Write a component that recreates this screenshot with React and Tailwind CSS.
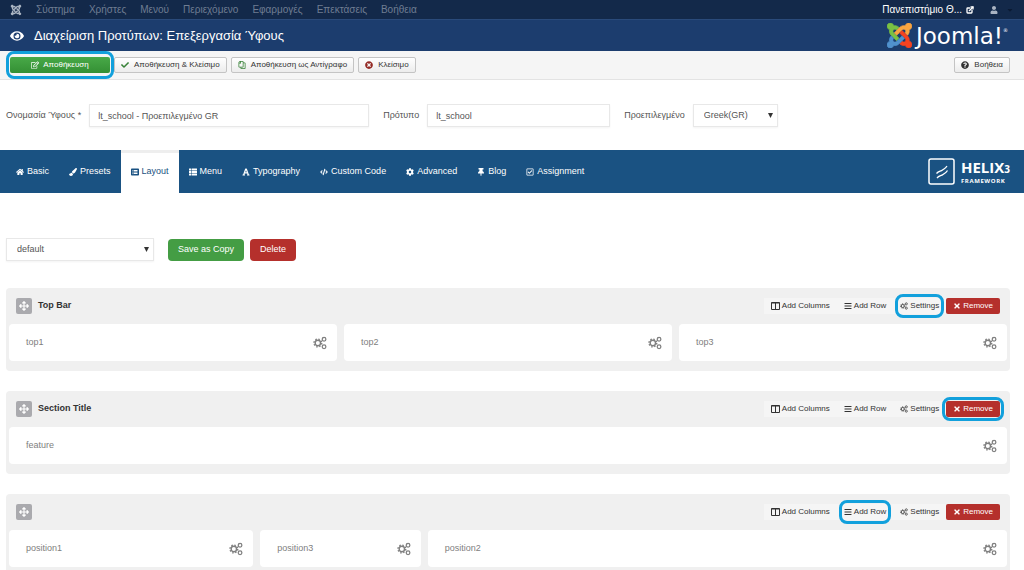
import React from 'react';
import {
  FaJoomla, FaEye, FaCheck, FaTimesCircle, FaQuestionCircle, FaUser, FaHome, FaPaintBrush,
  FaListAlt, FaThList, FaFont, FaCode, FaCog, FaThumbtack, FaRegCheckSquare, FaBars,
  FaTimes, FaArrowsAlt, FaRegCopy, FaCaretDown, FaRegEdit,
} from 'react-icons/fa';
import { FiExternalLink } from 'react-icons/fi';

const CogsIcon = ({ className }) => (
  <svg viewBox="0 0 26 26" className={className} fill="none" stroke="currentColor" aria-hidden="true">
    <circle cx="9" cy="13" r="5" strokeWidth="2.600" />
    <circle cx="9" cy="13" r="7.200" strokeWidth="2.600" strokeDasharray="2.830 2.830" />
    <circle cx="20.500" cy="6" r="3.400" strokeWidth="2.400" />
    <circle cx="20.500" cy="20" r="3.400" strokeWidth="2.400" />
  </svg>
);

const ColumnsIcon = ({ className }) => (
  <svg viewBox="0 0 9 8" className={className} fill="none" stroke="currentColor" aria-hidden="true">
    <path d="M.5 .5h8v7h-8zM4.500 1v6.500M.5 1h8" />
  </svg>
);

const menuItems = ['Σύστημα', 'Χρήστες', 'Μενού', 'Περιεχόμενο', 'Εφαρμογές', 'Επεκτάσεις', 'Βοήθεια'];

const tabs = [
  { label: 'Basic', icon: FaHome },
  { label: 'Presets', icon: FaPaintBrush },
  { label: 'Layout', icon: FaListAlt, active: true },
  { label: 'Menu', icon: FaThList },
  { label: 'Typography', icon: FaFont },
  { label: 'Custom Code', icon: FaCode },
  { label: 'Advanced', icon: FaCog },
  { label: 'Blog', icon: FaThumbtack },
  { label: 'Assignment', icon: FaRegCheckSquare },
];

const sections = [
  {
    title: 'Top Bar',
    marked: 'Settings',
    columns: [
      { name: 'top1', span: 'col-span-4' },
      { name: 'top2', span: 'col-span-4' },
      { name: 'top3', span: 'col-span-4' },
    ],
  },
  {
    title: 'Section Title',
    marked: 'Remove',
    columns: [{ name: 'feature', span: 'col-span-12' }],
  },
  {
    title: '',
    marked: 'Add Row',
    columns: [
      { name: 'position1', span: 'col-span-3' },
      { name: 'position3', span: 'col-span-2' },
      { name: 'position2', span: 'col-span-7' },
    ],
  },
];

const rowActions = [
  { label: 'Add Columns', icon: ColumnsIcon },
  { label: 'Add Row', icon: FaBars },
  { label: 'Settings', icon: CogsIcon },
  { label: 'Remove', icon: FaTimes },
];

const Marker = ({ className }) => (
  <span className={`pointer-events-none absolute z-10 rounded-lg border-[3px] border-[#12a0dc] ${className}`}></span>
);

const JoomlaMark = () => (
  <svg viewBox="0 32 448 448" className="size-[25px]" strokeWidth="12" aria-hidden="true">
    <path fill="#7ac143" stroke="#7ac143" d="M.6 92.100C.6 58.800 27.400 32 60.400 32c30 0 54.500 21.900 59.200 50.200 32.600-7.600 67.100.6 96.500 30l-44.300 44.300c-20.500-20.500-42.600-16.300-55.400-3.500-14.300 14.300-14.300 37.900 0 52.200l99.500 99.500-44 44.300c-87.700-87.200-49.700-49.700-99.800-99.700-26.800-26.500-35-64.800-24.800-98.900C20.400 144.600.6 120.700.6 92.100z" />
    <path fill="#f9a541" stroke="#f9a541" d="M130.100 208.500l44.300 44.300c10-10 89.700-89.700 99.700-99.800 14.300-14.300 37.600-14.300 51.900 0 12.800 12.800 17 35-3.500 55.400l44 44.300c31.200-31.200 38.500-67.600 28.900-101.200 29.200-4.100 51.900-29.200 51.900-59.500 0-33.200-26.800-60.100-59.800-60.100-30.300 0-55.400 22.500-59.500 51.600-33.800-9.900-71.700-1.500-98.300 25.100-18.300 19.100-71.100 71.500-99.600 99.900z" />
    <path fill="#f44321" stroke="#f44321" d="M396.400 360.700c8.200-32.700-.9-68.500-26.300-93.900-11.800-12.200 5 4.700-99.500-99.700l-44.300 44.300 99.700 99.700c14.300 14.300 14.300 37.600 0 51.900-12.800 12.800-35 17-55.400-3.500l-44 44.300c27.600 30.200 68 38.800 102.700 28 5.500 27.400 29.700 48.100 58.900 48.100 33 0 59.800-26.800 59.800-60.100 0-30.300-22.500-55.100-51.600-59.100z" />
    <path fill="#5091cd" stroke="#5091cd" d="M312.100 307.600l-44-44.300c-87 86.400-50.400 50.400-99.700 99.800-14.300 14.300-37.600 14.300-51.900 0-13.100-13.400-16.900-35.300 3.200-55.400l-44-44.300c-30.200 30.200-38 65.200-29.500 98.300-26.700 6-46.200 29.900-46.200 58.200C0 453.200 26.800 480 59.800 480c28.600 0 52.500-19.800 58.600-46.700 32.700 8.200 68.500-.6 94.200-26 32.100-32 12.200-12.400 99.500-99.700z" />
  </svg>
);

const ToolbarButton = ({ icon, children }) => (
  <button className="flex h-4 items-center gap-[5px] rounded-xs border border-[#c4c4c4] bg-linear-to-b from-white to-[#ececec] px-1.5 text-[8px] text-[#333]">
    {icon}
    {children}
  </button>
);

const SelectBox = ({ id, label, value, className }) => (
  <div className={`relative ${className}`}>
    <select
      id={id}
      aria-label={label}
      defaultValue={value}
      className="h-[23px] w-full appearance-none border border-[#e8e8e8] bg-white px-2.5 text-[9px] text-[#555] shadow-xs"
    >
      <option>{value}</option>
    </select>
    <svg viewBox="0 0 5 5" className="pointer-events-none absolute top-[9px] right-[5px] size-[5px] fill-[#333]" aria-hidden="true">
      <path d="M0 0h5L2.500 5z" />
    </svg>
  </div>
);

const LayoutSection = ({ section }) => (
  <section className="rounded-sm bg-[#f0f0f0] px-[3px] pb-2.5">
    <div className="flex h-9 items-center justify-between px-[7px]">
      <div className="flex items-center gap-1.5">
        <button aria-label="Move row" className="flex size-4 items-center justify-center rounded-xs bg-[#aaaaae] text-white">
          <FaArrowsAlt className="size-2.5" />
        </button>
        <h2 className="text-[9px] font-bold text-[#333]">{section.title}</h2>
      </div>
      <div className="flex">
        {rowActions.map(({ label, icon: Icon }) => (
          <button
            key={label}
            className={`relative flex h-4 items-center gap-0.5 px-[7px] text-[8px] ${
              label === 'Remove' ? 'rounded-xs bg-[#b5302c] text-white' : 'bg-[#f5f5f5] text-[#333]'
            }`}
          >
            <Icon className="h-2 w-auto" />
            {label}
            {section.marked === label && (
              <Marker className={label === 'Remove' ? '-inset-1' : 'inset-x-0.5 -inset-y-1'} />
            )}
          </button>
        ))}
      </div>
    </div>
    <div className="grid grid-cols-12 gap-[7px]">
      {section.columns.map((column) => (
        <div key={column.name} className={`flex h-[37px] items-center justify-between rounded-sm bg-white pr-2.5 pl-[17px] text-[9px] text-[#808080] ${column.span}`}>
          {column.name}
          <button aria-label={`Settings ${column.name}`}>
            <CogsIcon className="size-3.5" />
          </button>
        </div>
      ))}
    </div>
  </section>
);

const App = () => {
  return (
    <div className="bg-white font-['Liberation_Sans',Arial,sans-serif] text-[9px] text-[#555]">
      <nav className="flex h-5 items-center justify-between border-b border-[#2a4a7a] bg-[#13294a] px-2.5 text-[10px]">
        <div className="flex items-center gap-3.5 text-[#6f7d92]">
          <FaJoomla className="size-3 text-[#aab4c2]" />
          {menuItems.map((item) => <a key={item} href="#">{item}</a>)}
        </div>
        <div className="flex items-center text-white">
          <a href="#" className="flex items-center gap-1">Πανεπιστήμιο Θ... <FiExternalLink className="size-2" strokeWidth={4} /></a>
          <FaUser className="ml-4 size-2 text-[#aab4c2]" />
          <FaCaretDown className="ml-2 size-2 text-[#0b1a33]" />
        </div>
      </nav>

      <header className="flex h-[31px] items-center justify-between bg-[#1c3d6e] pr-4 pl-2.5 text-white">
        <div className="flex items-center gap-2.5">
          <FaEye className="size-3.5" />
          <h1 className="text-[13px]">Διαχείριση Προτύπων: Επεξεργασία Ύφους</h1>
        </div>
        <div className="flex items-center gap-1">
          <JoomlaMark />
          <span className="flex font-['DejaVu_Sans'] text-[23px] leading-6">Joomla!<sup className="top-0 text-[5px] leading-3">®</sup></span>
        </div>
      </header>

      <div className="flex h-[29px] items-center justify-between border-b border-[#e3e3e3] bg-[#f5f5f5] pr-3.5 pl-2.5">
        <div className="flex items-center gap-1">
          <button className="relative flex h-4 w-[100px] items-center justify-center gap-1 rounded-xs bg-linear-to-b from-[#48a948] to-[#349034] text-[8px] text-white">
            <FaRegEdit className="h-2 w-auto" />
            Αποθήκευση
            <Marker className="-inset-x-1 -inset-y-1.5" />
          </button>
          <ToolbarButton icon={<FaCheck className="size-2 text-[#378137]" />}>Αποθήκευση &amp; Κλείσιμο</ToolbarButton>
          <ToolbarButton icon={<FaRegCopy className="size-2 -scale-x-100 text-[#378137]" />}>Αποθήκευση ως Αντίγραφο</ToolbarButton>
          <ToolbarButton icon={<FaTimesCircle className="size-2 text-[#942a25]" />}>Κλείσιμο</ToolbarButton>
        </div>
        <ToolbarButton icon={<FaQuestionCircle className="size-2" />}>Βοήθεια</ToolbarButton>
      </div>

      <form className="flex items-center px-1.5 pt-6 pb-[23px]">
        <label htmlFor="title" className="mr-2">Ονομασία Ύφους *</label>
        <input id="title" defaultValue="lt_school - Προεπιλεγμένο GR" className="h-[23px] w-[280px] border border-[#e8e8e8] px-2 text-[9px] shadow-xs" />
        <label htmlFor="template" className="mr-2 ml-3.5">Πρότυπο</label>
        <input id="template" defaultValue="lt_school" className="h-[23px] w-[183px] border border-[#e8e8e8] px-2 text-[9px] shadow-xs" />
        <label htmlFor="home" className="mr-2 ml-3.5">Προεπιλεγμένο</label>
        <SelectBox id="home" label="Προεπιλεγμένο" value="Greek(GR)" className="w-[85px]" />
      </form>

      <nav className="flex h-[43px] items-center justify-between bg-[#1a5282] pr-3.5 pl-1.5 text-white">
        <div className="flex h-full">
          {tabs.map(({ label, icon: Icon, active }) => (
            <a
              key={label}
              href="#"
              className={`flex h-full items-center gap-[3px] border-t-3 px-2.5 pb-0.5 ${
                active ? 'border-[#eee] bg-white text-[#1a5282]' : 'border-transparent'
              }`}
            >
              <Icon className="h-2 w-auto" />
              {label}
            </a>
          ))}
        </div>
        <div className="flex items-center gap-1.5">
          <svg viewBox="0 0 27 27" className="size-[27px]" fill="none" stroke="currentColor" aria-hidden="true">
            <rect x="1" y="1" width="25" height="25" rx="2" strokeWidth="1.500" />
            <path d="M8.500 15.500c2-2.500 4-2 6-3.500s3-1.500 4.500-4M9 20c2-2.500 4-2 6-3.500s3-1.500 4.500-4" strokeWidth="1.300" />
          </svg>
          <div className="font-['Open_Sans',sans-serif] font-bold">
            <div className="flex items-baseline justify-between text-[15px] leading-4">HELIX<span className="text-[10px]">3</span></div>
            <div className="text-[6px] leading-2 tracking-widest">FRAMEWORK</div>
          </div>
        </div>
      </nav>

      <main className="px-1.5 pt-[45px] pr-3.5">
        <div className="flex items-center">
          <SelectBox id="preset" label="Layout preset" value="default" className="mr-3.5 w-[148px]" />
          <button className="mr-1.5 h-[22px] rounded-sm bg-[#449d44] px-2.5 text-white">Save as Copy</button>
          <button className="h-[22px] rounded-sm bg-[#b5302c] px-2.5 text-white">Delete</button>
        </div>
        <div className="mt-[27px] flex flex-col gap-5">
          {sections.map((section) => <LayoutSection key={section.marked} section={section} />)}
        </div>
      </main>
    </div>
  );
};

export default App;
